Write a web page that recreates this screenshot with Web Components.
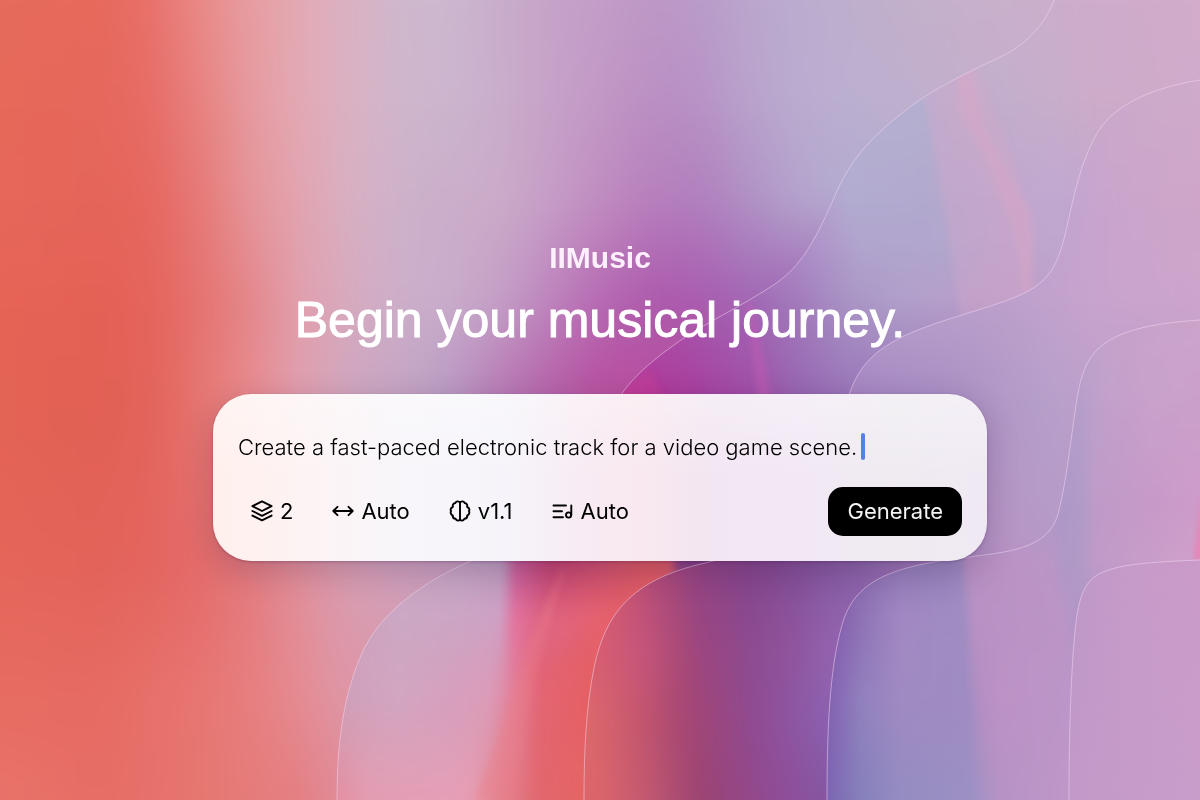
<!DOCTYPE html>
<html lang="en">
<head>
<meta charset="utf-8">
<meta name="viewport" content="width=device-width, initial-scale=1">
<title>IIMusic</title>
<style>
  body {
    margin: 0;
    font-family: Inter, "Liberation Sans", sans-serif;
    color: #0a0a0c;
    background: #c5a3c8;
  }
</style>
</head>
<body>

<music-hero>
  <aurora-backdrop slot="backdrop"></aurora-backdrop>
  <span slot="brand">IIMusic</span>
  <span slot="title">Begin your musical journey.</span>
  <prompt-card value="Create a fast-paced electronic track for a video game scene.">
    <option-chip icon="layers" label="Variations">2</option-chip>
    <option-chip icon="length" label="Length">Auto</option-chip>
    <option-chip icon="brain" label="Model">v1.1</option-chip>
    <option-chip icon="lyrics" label="Lyrics">Auto</option-chip>
    <span slot="action">Generate</span>
  </prompt-card>
</music-hero>

<script>
/* ---------- <aurora-backdrop> : colour meshes split by flowing curves ---------- */

const CURVES = {
  a: 'M1054 0C1046 22 1028 44 1002 56C956 78 932 90 906 110C860 145 846 170 833 200C812 248 797 270 772 286C738 308 715 318 684 338C655 358 636 374 623 392C590 445 600 500 548 530C520 544 490 552 466 563C412 588 378 618 362 653C344 694 337 740 337 800',
  b: 'M1200 80C1150 88 1112 106 1096 135C1080 164 1074 196 1067 226C1058 268 1048 283 1018 296C985 310 944 318 906 335C874 350 859 367 850 392C828 450 850 510 790 540C765 552 735 555 705 563C630 580 605 615 594 668C586 708 584 750 584 800',
  c: 'M1200 320C1138 324 1112 335 1097 350C1080 367 1078 392 1073 426C1068 462 1064 492 1058 514C1052 535 1036 546 1004 552C975 557 952 558 929 563C880 572 852 588 842 625C829 670 827 735 827 800',
  d: 'M1200 560C1150 562 1116 564 1097 575C1077 587 1076 620 1073 655C1070 700 1069 750 1069 800'
}

// Each band: an optional outline, a blur, and rows of [y, "x colour, x colour, ..."]
const BANDS = [
  { blur: 14, rows: [
    [0, '0 #e66b5d,100 #e7695c,150 #e8716a,200 #e98a88,250 #e79da0,300 #e3aab5,350 #dab2c3,400 #cfb8cd,450 #ccb8d0,500 #c9adcb,550 #c5a3c8,600 #c39ec7,650 #be98c6,700 #b99bc9,750 #bba6cd,800 #bbadd0,900 #c2b0cb,1000 #c9b0cb,1100 #ceaccc,1200 #d3adca'],
    [100, '0 #e66959,100 #e6675c,150 #e76c66,200 #e78280,250 #e69a9e,300 #e3a9b5,350 #dab2c3,400 #cfb6cc,450 #ccb5ce,500 #c9adcb,550 #c6a2c8,600 #c298c5,650 #bb8fc3,700 #b792c6,750 #b9a3cc,800 #baacd0,850 #bbafd0,900 #beafce,1000 #c6afcb'],
    [200, '0 #e7675b,100 #e5655a,150 #e6675f,200 #e67977,250 #e59599,300 #e2a4b1,350 #d8b0c2,400 #cdb2ca,450 #cbaeca,500 #caabc9,550 #c69dc6,600 #c08cc0,650 #b77fbd,700 #b17fbd,750 #b091c5,800 #b4a3cd,850 #b3acd0'],
    [300, '0 #e66456,100 #e46056,150 #e5645c,200 #e57370,250 #e4878b,300 #e0a0ae,350 #d7aabf,400 #ccafca,450 #c9accb,500 #c49fc6,550 #bd84bd,600 #b66ab3,650 #ad5bac,700 #a95bb0,750 #a168b4'],
    [390, '0 #e36354,100 #e26054,150 #e3635b,200 #e57670,250 #e88a8e,300 #e09fae,350 #cfa6bf,400 #c4a5c4,450 #b99bc3,500 #b87bb5,550 #b563aa,600 #b84f9f'],
    [560, '0 #e5655a,100 #e3635a,150 #e4655f,200 #e46b69,250 #e27b80,300 #e0909c,350 #d79fb3,400 #cda2bf,500 #bf9cc2'],
    [700, '0 #e76c62,100 #e66b63,200 #e77672,250 #e77e7f,300 #e58b91,340 #df95a5'],
    [800, '0 #e8736a,100 #e66d66,200 #e6766f,250 #e57c7a,300 #e47e82,340 #e08c98']
  ] },
  { edge: 'a', blur: 3, rows: [
    [0, '850 #b5b0d2,1000 #c8b0cb,1100 #ceaccc,1200 #d3adca'],
    [100, '850 #b5b0d2,925 #b5b0d0,960 #c2aecd,1000 #c2aecd,1050 #c7aecb,1100 #cdabc9,1200 #d0aacb'],
    [200, '820 #b4a0ce,850 #b2acd0,930 #b2a9ce,1000 #bfa7cc,1050 #c0a8d0,1080 #c2a7cf'],
    [250, '780 #ac86c3,820 #ae93c9,860 #b0a4cd,940 #b1a6cd,1000 #bda4cc,1060 #bfa6ce'],
    [300, '680 #a957ae,750 #a168b4,800 #a37cbc,850 #a995c5,900 #b09fca,950 #b69fca,1020 #bf9fc8'],
    [390, '600 #c0479a,650 #b0399a,700 #a642a0,750 #a050a9,800 #9768b3,850 #9b78ba'],
    [562, '400 #cba5c1,460 #c2a4c4,502 #bb9cc0,516 #c25c98,550 #bf4272,600 #cc4f6e,650 #d8585f,671 #d05868,678 #854086,710 #7a3b84'],
    [620, '350 #cfa0bd,400 #cca8c4,450 #cca6c4,500 #cfa0c4,514 #e3749f,540 #dd6585,580 #e36375,610 #e6616a'],
    [700, '345 #d0a0b9,400 #d3a5c0,450 #d69fbd,488 #dc9cb8,512 #e2829a,540 #e36a7c,590 #e56266'],
    [800, '337 #e48f9f,370 #e39db2,450 #e59fb7,474 #e69cb0,500 #e28490,540 #e16b73,584 #e46a66']
  ] },
  { edge: 'b', blur: 10, rows: [
    [100, '1080 #c9a9cb,1200 #cfaaca'],
    [200, '1070 #c2a5d0,1120 #cba5cb,1200 #cfa6ca'],
    [300, '950 #b8a0cb,1000 #bc9fcb,1050 #c1a2cd,1100 #c8a4cd,1200 #cda4cb'],
    [400, '850 #a582c0,900 #a68ac3,950 #a98fc4,1000 #b198c6,1050 #b7a0cb,1080 #bc9fca'],
    [550, '600 #d75a68,650 #b24a78,700 #8f4485,750 #82448b,800 #814f98,850 #8560a5,950 #a78bc2,1000 #b895c5,1050 #b598c6'],
    [650, '590 #d95e70,640 #c8567b,680 #aa4a77,700 #9c4580,750 #8d4b90,800 #9057a0,830 #9463b0'],
    [720, '585 #de6a6c,640 #c5566e,680 #a94873,700 #a04678,750 #904a90,800 #8d58a6,830 #8a62b0'],
    [800, '585 #dd6668,600 #db646b,650 #c05870,700 #9b4372,750 #93488a,800 #8c509d,827 #8456a0']
  ] },
  { edge: 'c', blur: 3, rows: [
    [320, '1080 #bda3ca,1110 #c5a3ca,1200 #cda4cb'],
    [400, '1076 #b59eca,1105 #c1a1cb,1135 #c6a0ca,1150 #c9a2cb,1200 #caa0ca'],
    [500, '1060 #ac98c8,1082 #b29ac8,1094 #be9bc8,1150 #c799c8,1200 #cf9bca'],
    [562, '845 #8560a8,900 #917cb8,960 #9988be,967 #b68fc2,1020 #bb94c5,1054 #b996c5,1062 #af98c6,1082 #b29ac6,1096 #c09ac8,1200 #d0a0c9'],
    [620, '838 #8660ae,870 #9278b8,900 #a288c3,965 #a08dc2,973 #b991c4,1060 #bc95c6,1075 #b296c6'],
    [700, '830 #8463b2,860 #9180be,900 #a08ac2,968 #9f8cc2,979 #b38ec4,1000 #bd92c6,1070 #bc96c8'],
    [800, '827 #7c64b2,860 #8580bb,900 #948cc2,974 #9c90c3,986 #ac92c5,1000 #b592c5,1070 #c098c8']
  ] },
  { edge: 'd', blur: 0, rows: [
    [560, '1070 #bd98c8,1130 #c79bc9,1200 #cb9bc8'],
    [800, '1070 #c299c8,1200 #c99dca']
  ] }
]

// Soft light shafts inside single bands
const STREAKS = {
  a: `
    <g filter="url(#soft)">
      <path d="M920 80L975 60L1034 215V330H962Q946 200 920 80Z" fill="#d3a5c9" opacity=".35"/>
      <path d="M956 70H972L985 130L1030 215L1032 262L1026 310L1014 230L990 165L962 115Z" fill="#e3a5c6" opacity=".3"/>
      <path d="M746 302H752L772 400H758Z" fill="#c75ab4" opacity=".5"/>
      <path d="M604 410L650 368L668 410Z" fill="#cc3f94" opacity=".4"/>
      <path d="M566 560L530 640L500 735L474 800H516L530 700Z" fill="#ee7a86" opacity=".35"/>
    </g>
    <path d="M534 662L600 642V830H530Z" fill="#e65a5c" opacity=".25" filter="url(#softer)"/>`,
  c: '<path d="M1204 490L1194 560H1204Z" fill="#f07aae" opacity=".8" filter="url(#soft)"/>'
}

// Paint past the frame, so that a blur never pulls in transparent edges
const AREA = 'x="-100" y="-100" width="1400" height="1000"'

function meshBand({ edge, blur, rows }, b) {
  const layers = rows.map(([y, stops], i) => {
    const id = `b${b}r${i}`
    const prev = i ? rows[i - 1][0] : 0
    const colours = stops.split(',').map(s => {
      const [x, c] = s.split(' ')
      return `<stop offset="${x / 1200}" stop-color="${c}"/>`
    }).join('')
    // the first row is solid; every next one fades in over the one before it
    const fade = i ? `
      <linearGradient id="${id}f" gradientUnits="userSpaceOnUse" x1="0" y1="${prev}" x2="0" y2="${y}">
        <stop offset="0" stop-color="#fff" stop-opacity="0"/><stop offset="1" stop-color="#fff"/>
      </linearGradient>
      <mask id="${id}m" maskUnits="userSpaceOnUse" ${AREA}>
        <rect ${AREA} fill="url(#${id}f)"/>
      </mask>` : ''
    return `
      <linearGradient id="${id}" gradientUnits="userSpaceOnUse" x1="0" y1="0" x2="1200" y2="0">${colours}</linearGradient>
      ${fade}
      <rect ${AREA} fill="url(#${id})" ${i ? `mask="url(#${id}m)"` : ''}/>`
  }).join('')

  const mesh = blur ? `
    <filter id="blur${b}" filterUnits="userSpaceOnUse" color-interpolation-filters="sRGB" ${AREA}>
      <feGaussianBlur stdDeviation="${blur}"/>
    </filter>
    <g filter="url(#blur${b})">${layers}</g>` : layers

  if (!edge) return mesh
  return `
    <clipPath id="clip-${edge}"><path d="${CURVES[edge]}H1200V0Z"/></clipPath>
    <g clip-path="url(#clip-${edge})">${mesh}${STREAKS[edge] ?? ''}</g>`
}

class AuroraBackdrop extends HTMLElement {
  constructor() {
    super()
    this.attachShadow({ mode: 'open' }).innerHTML = `
      <style>
        :host { display: block; }
        svg { display: block; width: 100%; height: 100%; }
        .lines { fill: none; stroke: #f7dcf5; stroke-opacity: .5; stroke-width: 1; }
      </style>
      <svg viewBox="0 0 1200 800" preserveAspectRatio="xMidYMid slice" aria-hidden="true">
        <filter id="soft" x="-20%" y="-20%" width="140%" height="140%"><feGaussianBlur stdDeviation="3"/></filter>
        <filter id="softer" x="-30%" y="-30%" width="160%" height="160%"><feGaussianBlur stdDeviation="8"/></filter>
        ${BANDS.map(meshBand).join('')}
        <g class="lines">${Object.values(CURVES).map(d => `<path d="${d}"/>`).join('')}</g>
      </svg>`
  }
}
customElements.define('aurora-backdrop', AuroraBackdrop)

/* ---------- <music-hero> ---------- */

class MusicHero extends HTMLElement {
  constructor() {
    super()
    this.attachShadow({ mode: 'open' }).innerHTML = `
      <style>
        :host {
          display: grid;
          min-height: 100vh;
          position: relative;
          overflow: hidden;
        }
        ::slotted([slot="backdrop"]) {
          position: absolute;
          inset: 0;
        }
        main {
          position: relative;
          align-self: center;
          display: flex;
          flex-direction: column;
          align-items: center;
          padding: 0 24px;
          font-family: "Liberation Sans", Arial, sans-serif;
          text-align: center;
          color: #fff;
        }
        .brand {
          margin: 0;
          font-size: 30px;
          line-height: 36px;
          font-weight: 700;
          color: #fdf0fc;
        }
        h1 {
          margin: 14px 0 44px;
          font-size: 50px;
          line-height: 60px;
          font-weight: 400;
          -webkit-text-stroke: 1px #fff;
        }
        ::slotted(prompt-card) { width: 100%; max-width: 774px; }
      </style>
      <slot name="backdrop"></slot>
      <main>
        <p class="brand"><slot name="brand"></slot></p>
        <h1><slot name="title"></slot></h1>
        <slot></slot>
      </main>`
  }
}
customElements.define('music-hero', MusicHero)

/* ---------- <prompt-card value="..."> ---------- */

class PromptCard extends HTMLElement {
  constructor() {
    super()
    this.attachShadow({ mode: 'open' }).innerHTML = `
      <style>
        :host {
          display: block;
          box-sizing: border-box;
          padding: 39px 25px 25px;
          border-radius: 38px;
          background:
            linear-gradient(180deg, rgb(255 255 255 / 30%), transparent 50%),
            linear-gradient(90deg, #fff0ec, #fdf3f4 12%, #f8f6fa 24%, #f6f4fa 38%, #f8ebf3 48%, #f9e8ef 55%, #f2e6f2 64%, #f2e8f5 76%, #efebf1 88%, #f0e9f4);
          box-shadow: 0 10px 32px rgb(50 20 60 / 22%), 0 1px 3px rgb(50 20 60 / 25%);
          font-family: Inter, "Liberation Sans", sans-serif;
          color: #0a0a0c;
          text-align: left;
        }
        .field { display: flex; align-items: center; gap: 4px; height: 28px; }
        input {
          field-sizing: content;
          min-width: 0;
          padding: 0;
          border: 0;
          outline: 0;
          background: none;
          font: inherit;
          font-size: 22px;
          font-weight: 330;
          line-height: 28px;
          color: #000;
          caret-color: #4f7df0;
        }
        .caret { flex: none; width: 4px; height: 27px; border-radius: 2px; background: #5580ea; }
        .bar {
          display: flex;
          flex-wrap: wrap;
          align-items: center;
          justify-content: space-between;
          gap: 14px;
          margin-top: 26px;
        }
        .options { display: flex; flex-wrap: wrap; gap: 14px; }
        .go {
          height: 49px;
          padding: 0 19px;
          border: 0;
          border-radius: 15px;
          background: #000;
          font: inherit;
          font-size: 22px;
          color: #f4f2f4;
          cursor: pointer;
        }
      </style>
      <div class="field">
        <input type="text" aria-label="Describe your track">
        <span class="caret"></span>
      </div>
      <div class="bar">
        <div class="options"><slot></slot></div>
        <button class="go" type="button"><slot name="action"></slot></button>
      </div>`
  }

  connectedCallback() {
    this.shadowRoot.querySelector('input').value = this.getAttribute('value') ?? ''
  }
}
customElements.define('prompt-card', PromptCard)

/* ---------- <option-chip icon="..." label="..."> ---------- */

const ICONS = {
  layers: '<path d="M12 2.4 21.6 7.2 12 12 2.4 7.2Z"/><path d="M2.4 12 12 16.8 21.6 12"/><path d="M2.4 16.6 12 21.4 21.6 16.6"/>',
  length: '<path d="M2.5 12H21.5M6.5 7.8 2.3 12 6.5 16.2M17.5 7.8 21.7 12 17.5 16.2"/>',
  brain: '<path d="M12 3.5V20.5"/><path d="M12 3.6C10.8 1.9 8.2 2 7.4 4 5.4 4.2 4.4 6 4.9 7.8 2.9 8.8 2.3 10.4 3 12 2.2 13.8 3 15.7 4.7 16.3 4.6 18.2 5.8 19.7 7.6 19.8 8.4 22 10.9 22.1 12 20.4 13.1 22.1 15.6 22 16.4 19.8 18.2 19.7 19.4 18.2 19.3 16.3 21 15.7 21.8 13.8 21 12 21.7 10.4 21.1 8.8 19.1 7.8 19.6 6 18.6 4.2 16.6 4 15.8 2 13.2 1.9 12 3.6Z"/>',
  lyrics: '<path d="M2.5 6.5H15M2.5 12.3H11M2.5 18.2H12M20.3 6.5V16"/><circle cx="17.6" cy="16" r="2.6"/>'
}

class OptionChip extends HTMLElement {
  constructor() {
    super()
    this.attachShadow({ mode: 'open' }).innerHTML = `
      <style>
        :host { display: block; }
        button {
          display: flex;
          align-items: center;
          gap: 6px;
          height: 49px;
          padding: 0 12px;
          border: 0;
          border-radius: 15px;
          background: none;
          font: inherit;
          font-size: 22px;
          font-weight: 430;
          color: #000;
          cursor: pointer;
        }
        button:hover { background: rgb(0 0 0 / 5%); }
        svg {
          width: 24px;
          height: 24px;
          fill: none;
          stroke: currentColor;
          stroke-width: 1.9;
          stroke-linecap: round;
          stroke-linejoin: round;
        }
      </style>
      <button type="button">
        <svg viewBox="0 0 24 24" aria-hidden="true"></svg>
        <span><slot></slot></span>
      </button>`
  }

  connectedCallback() {
    this.shadowRoot.querySelector('svg').innerHTML = ICONS[this.getAttribute('icon')] ?? ''
    this.shadowRoot.querySelector('button').title = this.getAttribute('label') ?? ''
  }
}
customElements.define('option-chip', OptionChip)
</script>
</body>
</html>
